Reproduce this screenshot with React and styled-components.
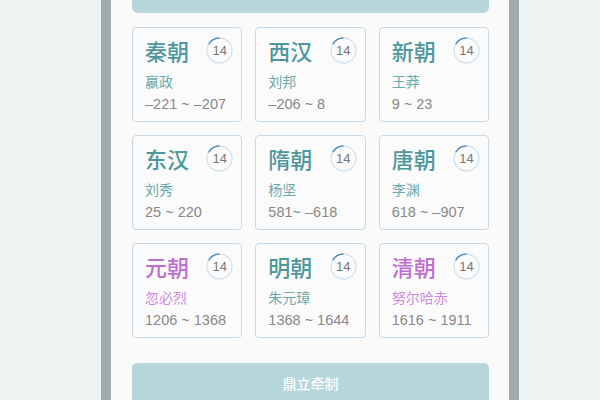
import styled, { createGlobalStyle } from "styled-components";

const dynasties = [
  { name: "秦朝", ruler: "嬴政", years: "–221 ~ –207" },
  { name: "西汉", ruler: "刘邦", years: "–206 ~ 8" },
  { name: "新朝", ruler: "王莽", years: "9 ~ 23" },
  { name: "东汉", ruler: "刘秀", years: "25 ~ 220" },
  { name: "隋朝", ruler: "杨坚", years: "581~ –618" },
  { name: "唐朝", ruler: "李渊", years: "618 ~ –907" },
  { name: "元朝", ruler: "忽必烈", years: "1206 ~ 1368", foreign: true },
  { name: "明朝", ruler: "朱元璋", years: "1368 ~ 1644" },
  { name: "清朝", ruler: "努尔哈赤", years: "1616 ~ 1911", foreign: true },
];

function Badge({ count }) {
  return (
    <BadgeWrap>
      <svg width="27" height="27" viewBox="0 0 27 27">
        <circle cx="13.5" cy="13.5" r="12.5" fill="none" stroke="#d4e4ee" strokeWidth="1.4" />
        <path
          d="M 2.7 7.25 A 12.5 12.5 0 0 1 13.5 1"
          fill="none"
          stroke="#4f88ba"
          strokeWidth="1.4"
        />
      </svg>
      <BadgeText>{count}</BadgeText>
    </BadgeWrap>
  );
}

export default function App() {
  return (
    <>
      <GlobalStyle />
      <Frame>
        <Panel>
          <TopButton />
          <Grid>
            {dynasties.map((d) => (
              <Card key={d.name}>
                <CardHead>
                  <Title $foreign={d.foreign}>{d.name}</Title>
                  <Badge count={14} />
                </CardHead>
                <Ruler $foreign={d.foreign}>{d.ruler}</Ruler>
                <Years>{d.years}</Years>
              </Card>
            ))}
          </Grid>
          <ActionButton>鼎立牵制</ActionButton>
        </Panel>
      </Frame>
    </>
  );
}

const GlobalStyle = createGlobalStyle`
  body {
    margin: 0;
    background: #eef4f4;
    font-family: "Liberation Sans", "Noto Sans CJK SC", sans-serif;
    overflow: hidden;
  }
`;

const Frame = styled.div`
  margin-left: 101px;
  width: 418px;
  height: 400px;
  box-sizing: border-box;
  border-left: 10px solid #a2abab;
  border-right: 10px solid #a2abab;
  background: #fafafa;
`;

const Panel = styled.div`
  padding: 0 20px 0 21px;
`;

const TopButton = styled.div`
  height: 13px;
  background: #b6d6db;
  border-radius: 0 0 6px 6px;
`;

const Grid = styled.div`
  display: grid;
  grid-template-columns: repeat(3, 1fr);
  grid-auto-rows: 95px;
  gap: 13px;
  margin-top: 14px;
`;

const Card = styled.div`
  box-sizing: border-box;
  border: 1px solid #c5d9e8;
  border-radius: 4px;
  background: #fbfbfb;
  padding: 9px 8px 0 12px;
`;

const CardHead = styled.div`
  display: flex;
  justify-content: space-between;
  align-items: center;
  height: 27px;
`;

const Title = styled.span`
  font-family: "Noto Sans CJK SC", sans-serif;
  font-size: 22px;
  font-weight: 500;
  line-height: 27px;
  color: ${({ $foreign }) => ($foreign ? "#bf6dd4" : "#4e979c")};
`;

const BadgeWrap = styled.div`
  position: relative;
  width: 27px;
  height: 27px;
  svg {
    display: block;
  }
`;

const BadgeText = styled.span`
  position: absolute;
  inset: 0;
  display: flex;
  align-items: center;
  justify-content: center;
  font-size: 13px;
  color: #777;
`;

const Ruler = styled.div`
  font-family: "Noto Sans CJK SC", sans-serif;
  margin-top: 7px;
  font-size: 14px;
  line-height: 20px;
  color: ${({ $foreign }) => ($foreign ? "#cc8ce0" : "#68a9ae")};
`;

const Years = styled.div`
  margin-top: 3px;
  font-size: 14.5px;
  line-height: 20px;
  color: #888;
`;

const ActionButton = styled.div`
  margin-top: 25px;
  height: 40px;
  border-radius: 5px 5px 0 0;
  background: #b6d6db;
  color: #fff;
  font-family: "Noto Sans CJK SC", sans-serif;
  font-size: 14px;
  font-weight: 500;
  display: flex;
  align-items: center;
  justify-content: center;
`;
